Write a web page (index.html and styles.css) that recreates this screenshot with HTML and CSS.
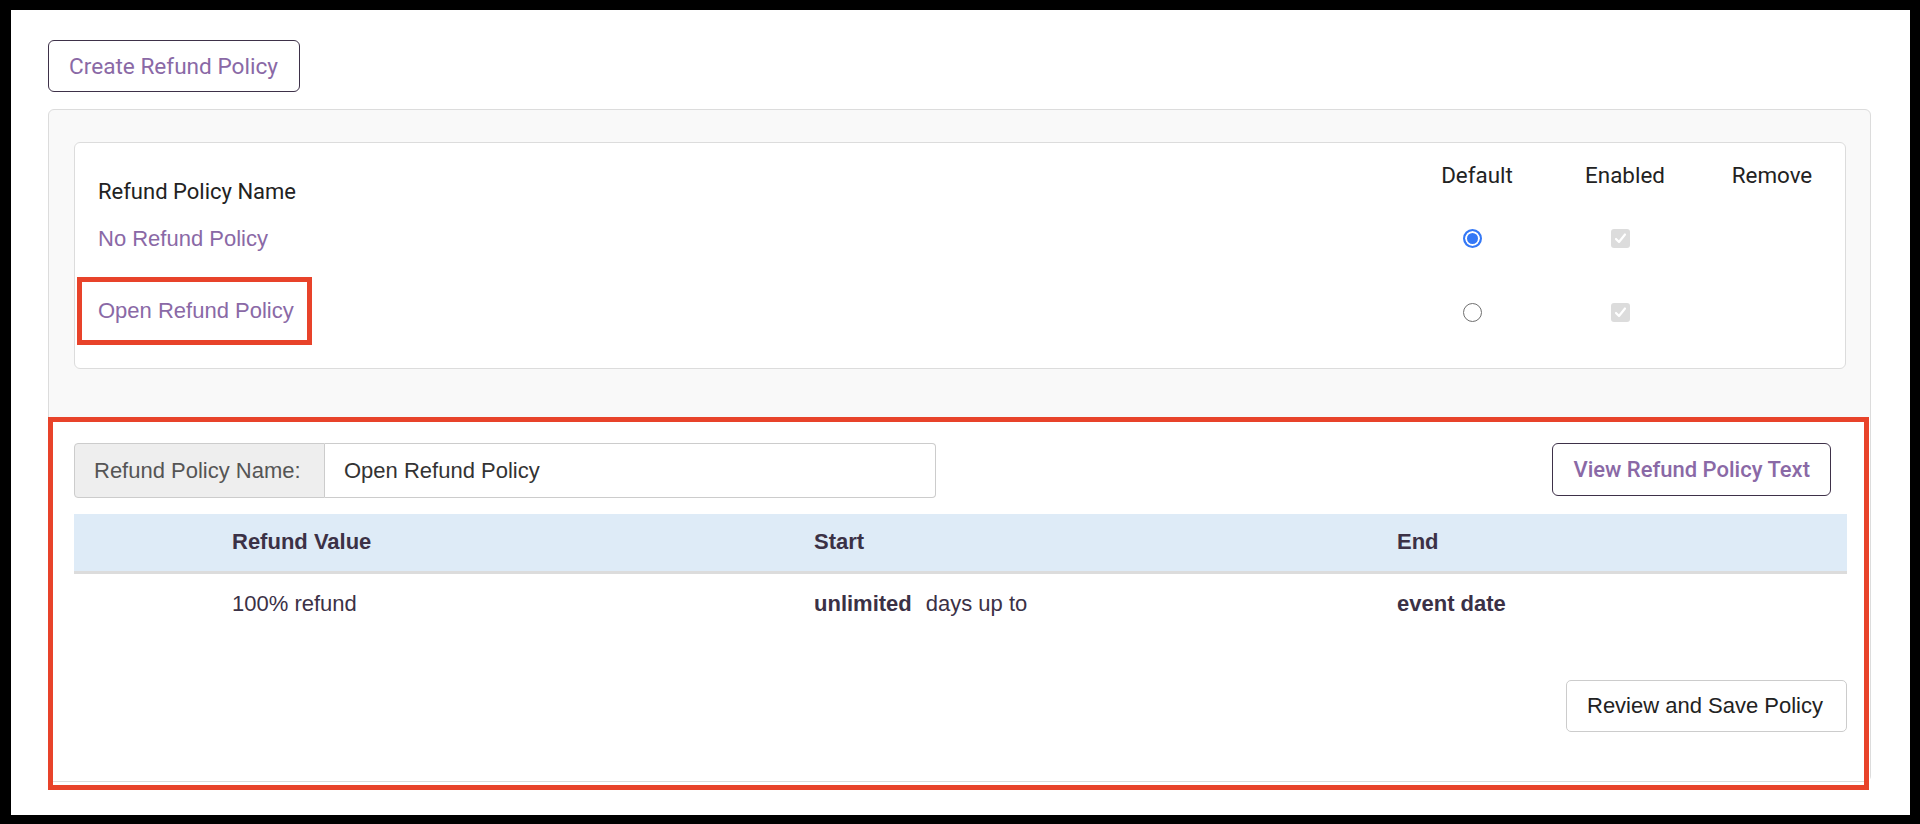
FILE: index.html
```html
<!DOCTYPE html>
<html>
<head>
<meta charset="utf-8">
<link rel="stylesheet" href="styles.css">
</head>
<body>
<div class="screen">
  <button class="btn btn-create">Create Refund Policy</button>

  <div class="panel">
    <div class="list-wrap">
      <div class="card">
        <div class="grid">
          <div class="h-name">Refund Policy Name</div>
          <div class="h-col">Default</div>
          <div class="h-col">Enabled</div>
          <div class="h-col">Remove</div>

          <div class="c-name row1"><a class="link">No Refund Policy</a></div>
          <div class="c-ctl row1"><span class="radio on"></span></div>
          <div class="c-ctl row1"><span class="check"><svg viewBox="0 0 19 19" width="19" height="19"><path d="M5 10 L8 13 L14 5.5" fill="none" stroke="#fff" stroke-width="2.2" stroke-linecap="round" stroke-linejoin="round"/></svg></span></div>
          <div class="c-ctl row1"></div>

          <div class="c-name row2"><span class="mark-wrap"><a class="link">Open Refund Policy</a><span class="annot annot-small"></span></span></div>
          <div class="c-ctl row2"><span class="radio"></span></div>
          <div class="c-ctl row2"><span class="check"><svg viewBox="0 0 19 19" width="19" height="19"><path d="M5 10 L8 13 L14 5.5" fill="none" stroke="#fff" stroke-width="2.2" stroke-linecap="round" stroke-linejoin="round"/></svg></span></div>
          <div class="c-ctl row2"></div>
        </div>
      </div>
    </div>

    <div class="edit">
      <span class="annot annot-big"></span>
      <div class="edit-top">
        <div class="input-group">
          <span class="addon">Refund Policy Name:</span>
          <span class="input">Open Refund Policy</span>
        </div>
        <button class="btn btn-view">View Refund Policy Text</button>
      </div>

      <div class="tbl">
        <div class="tr th">
          <div></div>
          <div>Refund Value</div>
          <div>Start</div>
          <div>End</div>
        </div>
        <div class="tr td">
          <div></div>
          <div>100% refund</div>
          <div><b>unlimited</b><span class="days">days up to</span></div>
          <div><b>event date</b></div>
        </div>
      </div>

      <div class="actions">
        <button class="btn btn-save">Review and Save Policy</button>
      </div>
    </div>
  </div>
</div>
</body>
</html>
```

FILE: styles.css
```css
* { box-sizing: border-box; }
html, body { margin: 0; padding: 0; }
body {
  background: #000;
  width: 1920px;
  height: 824px;
  overflow: hidden;
  font-family: "Liberation Sans", Arial, sans-serif;
  font-size: 22px;
  line-height: 31px;
  color: #333;
}
.screen {
  margin: 10px 10px 0 11px;
  height: 805px;
  background: #fff;
  padding: 30px 39px 0 37px;
}
.btn {
  display: inline-flex;
  align-items: center;
  background: #fff;
  font-size: 22px;
  cursor: pointer;
}
.btn-create {
  height: 52px;
  width: 252px;
  padding: 0 0 0 20px;
  border: 1px solid #3e3149;
  border-radius: 6px;
  color: #8a69a6;
  font-family: Roboto, "Liberation Sans", sans-serif;
  font-size: 22.6px;
}
.panel {
  margin-top: 17px;
  background: #f9f9f9;
  border: 1px solid #dcdcdc;
  border-radius: 6px;
}
.list-wrap {
  padding: 32px 24px 48px 25px;
}
.card {
  background: #fff;
  border: 1px solid #dcdcdc;
  border-radius: 6px;
  height: 227px;
  padding-left: 23px;
}
.grid {
  display: grid;
  grid-template-columns: 1fr 148px 148px 146px;
}
.h-name {
  padding-top: 33px;
  color: #222;
  font-family: Roboto, "Liberation Sans", sans-serif;
  font-size: 22px;
}
.h-col {
  padding-top: 17px;
  text-align: center;
  color: #222;
  font-family: Roboto, "Liberation Sans", sans-serif;
  font-size: 22.4px;
}
.row1 { margin-top: 16px; }
.row2 { margin-top: 41px; }
.c-ctl {
  display: flex;
  align-items: center;
  justify-content: center;
  padding-right: 9px;
  height: 31px;
}
.row2.c-ctl { padding-top: 4px; }
.link {
  color: #8a69a6;
  text-decoration: none;
}
.mark-wrap { position: relative; display: inline-block; }
.annot {
  position: absolute;
  border: 5px solid #e8432a;
  pointer-events: none;
}
.annot-small {
  left: -21px;
  top: -18px;
  width: 235px;
  height: 68px;
}
.radio {
  width: 19px;
  height: 19px;
  border-radius: 50%;
  border: 1px solid #6f6f6f;
  background: #fff;
  display: block;
}
.radio.on {
  border: 2px solid #3478f6;
  background: #3478f6;
  box-shadow: inset 0 0 0 2px #fff;
}
.check {
  width: 19px;
  height: 19px;
  border-radius: 3px;
  background: #dcdcdc;
  display: block;
}
.check svg { display: block; }

.edit {
  position: relative;
  background: #fff;
  padding: 26px 23px 49px 25px;
}
.annot-big {
  left: -1px;
  top: 0;
  width: 1821px;
  height: 373px;
}
.edit-top {
  display: flex;
  justify-content: space-between;
  align-items: flex-start;
}
.input-group {
  display: flex;
  width: 862px;
  height: 55px;
}
.addon {
  width: 251px;
  background: #eee;
  border: 1px solid #ccc;
  border-radius: 4px 0 0 4px;
  color: #555;
  padding-left: 19px;
  display: flex;
  align-items: center;
}
.input {
  flex: 1;
  border: 1px solid #ccc;
  border-left: none;
  border-radius: 0 4px 4px 0;
  color: #333;
  padding-left: 19px;
  display: flex;
  align-items: center;
}
.btn-view {
  height: 53px;
  margin-right: 16px;
  padding: 0 20px;
  border: 1px solid #3e3149;
  border-radius: 6px;
  color: #8a69a6;
  font-family: Roboto, "Liberation Sans", sans-serif;
  font-weight: 500;
  font-size: 22px;
}
.tbl {
  margin-top: 16px;
  color: #3b3146;
}
.tr {
  display: grid;
  grid-template-columns: 158px 582px 583px 1fr;
}
.th {
  background: #deebf7;
  border-bottom: 3px solid #dcdcdc;
  padding: 12px 0 14px;
  font-weight: bold;
}
.td {
  padding: 14px 0 14px;
}
.td b { font-weight: bold; }
.days { margin-left: 14px; }
.actions {
  margin-top: 47px;
  display: flex;
  justify-content: flex-end;
}
.btn-save {
  height: 52px;
  width: 281px;
  padding: 0 0 0 20px;
  border: 1px solid #ccc;
  border-radius: 5px;
  color: #222;
  font-family: "Liberation Sans", Arial, sans-serif;
}
```
